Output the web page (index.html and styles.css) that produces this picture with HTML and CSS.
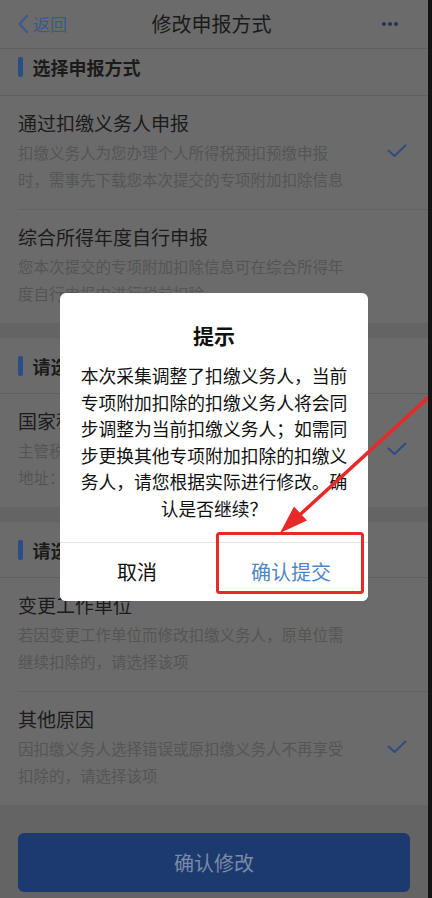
FILE: index.html
```html
<!DOCTYPE html>
<html lang="zh-CN">
<head>
<meta charset="utf-8">
<title>修改申报方式</title>
<link rel="stylesheet" href="styles.css">
</head>
<body>
<div class="page">
  <header class="nav">
    <div class="nav-left">
      <svg class="back-icon" width="12" height="20" viewBox="0 0 12 20"><path d="M10 2 L2.5 10 L10 18" fill="none" stroke="#3b5890" stroke-width="2" stroke-linecap="round" stroke-linejoin="round"/></svg>
      <span class="back-text">返回</span>
    </div>
    <div class="nav-title">修改申报方式</div>
    <div class="nav-right"><span class="dot"></span><span class="dot"></span><span class="dot"></span></div>
  </header>

  <section class="section first">
    <div class="sec-head first"><span class="bar"></span><span class="sec-title">选择申报方式</span></div>
    <div class="row">
      <div class="row-text">
        <div class="row-title">通过扣缴义务人申报</div>
        <div class="row-desc">扣缴义务人为您办理个人所得税预扣预缴申报时，需事先下载您本次提交的专项附加扣除信息</div>
      </div>
      <svg class="check" width="20" height="14" viewBox="0 0 20 14"><path d="M1.5 6.5 L7.5 12 L18.5 1.5" fill="none" stroke="#2e4c84" stroke-width="2" stroke-linecap="round" stroke-linejoin="round"/></svg>
    </div>
    <div class="row">
      <div class="row-text">
        <div class="row-title">综合所得年度自行申报</div>
        <div class="row-desc">您本次提交的专项附加扣除信息可在综合所得年度自行申报中进行税前扣除</div>
      </div>
    </div>
  </section>

  <section class="section">
    <div class="sec-head"><span class="bar"></span><span class="sec-title">请选择扣缴义务人</span></div>
    <div class="row">
      <div class="row-text">
        <div class="row-title">国家税务总局</div>
        <div class="row-desc">主管税务机关<br>地址：某路</div>
      </div>
      <svg class="check" width="20" height="14" viewBox="0 0 20 14"><path d="M1.5 6.5 L7.5 12 L18.5 1.5" fill="none" stroke="#2e4c84" stroke-width="2" stroke-linecap="round" stroke-linejoin="round"/></svg>
    </div>
  </section>

  <section class="section">
    <div class="sec-head"><span class="bar"></span><span class="sec-title">请选择修改原因</span></div>
    <div class="row">
      <div class="row-text">
        <div class="row-title">变更工作单位</div>
        <div class="row-desc">若因变更工作单位而修改扣缴义务人，原单位需继续扣除的，请选择该项</div>
      </div>
    </div>
    <div class="row">
      <div class="row-text">
        <div class="row-title">其他原因</div>
        <div class="row-desc">因扣缴义务人选择错误或原扣缴义务人不再享受扣除的，请选择该项</div>
      </div>
      <svg class="check" width="20" height="14" viewBox="0 0 20 14"><path d="M1.5 6.5 L7.5 12 L18.5 1.5" fill="none" stroke="#2e4c84" stroke-width="2" stroke-linecap="round" stroke-linejoin="round"/></svg>
    </div>
  </section>

  <footer class="footer">
    <button class="submit">确认修改</button>
  </footer>

  <div class="mask">
    <div class="dialog">
      <div class="dialog-title">提示</div>
      <div class="dialog-body">本次采集调整了扣缴义务人，当前专项附加扣除的扣缴义务人将会同步调整为当前扣缴义务人；如需同步更换其他专项附加扣除的扣缴义务人，请您根据实际进行修改。确认是否继续？</div>
      <div class="dialog-actions">
        <button class="action cancel">取消</button>
        <button class="action confirm">确认提交</button>
      </div>
    </div>
  </div>

  <svg class="annotation" width="428" height="898" viewBox="0 0 428 898">
    <rect x="217.5" y="533.5" width="145" height="59" rx="2" fill="none" stroke="#e62a2a" stroke-width="3"/>
    <line x1="440" y1="386.6" x2="298" y2="516.5" stroke="#e62a2a" stroke-width="3.5" stroke-linecap="round"/>
    <polygon points="280,533 307,520.5 294,506.5" fill="#e62a2a"/>
  </svg>
</div>
</body>
</html>
```

FILE: styles.css
```css
html, body {
  margin: 0;
  padding: 0;
}
body {
  background: #141414;
  font-family: "Noto Sans CJK SC", "Noto Sans", "Liberation Sans", sans-serif;
}
.page {
  position: relative;
  width: 428px;
  height: 898px;
  overflow: hidden;
  background: #646464;
}

/* nav */
.nav {
  height: 48px;
  display: grid;
  grid-template-columns: 1fr auto 1fr;
  align-items: center;
  background: #6b6b6b;
  border-bottom: 1px solid #5f5f5f;
  padding: 0 30px 0 17px;
}
.nav-left {
  display: flex;
  align-items: center;
  gap: 4px;
  color: #3b5890;
}
.back-icon {
  display: block;
}
.back-text {
  font-size: 17px;
  line-height: 24px;
}
.nav-title {
  font-size: 20px;
  color: #1b1b1b;
  line-height: 28px;
  padding-left: 8px;
}
.nav-right {
  display: flex;
  justify-content: flex-end;
  gap: 2px;
}
.dot {
  width: 4px;
  height: 4px;
  border-radius: 50%;
  background: #29324d;
}

/* sections */
.section {
  background: #6b6b6b;
  margin-top: 15px;
}
.section.first {
  margin-top: 0;
}
.sec-head {
  height: 56px;
  display: flex;
  align-items: center;
  padding-left: 18px;
  border-bottom: 1px solid #5f5f5f;
  box-sizing: border-box;
}
.sec-head.first {
  height: 47px;
  padding-bottom: 10px;
}
.bar {
  width: 4.5px;
  height: 20px;
  border-radius: 2px;
  background: #2c4c88;
  margin-right: 10px;
}
.sec-title {
  font-size: 18px;
  font-weight: bold;
  color: #1b1b1b;
  line-height: 24px;
}
.row {
  display: flex;
  align-items: center;
  margin-left: 18px;
  padding: 13px 21px 16px 0;
}
.row + .row {
  border-top: 1px solid #626262;
}
.row-text {
  flex: 1;
  max-width: 336px;
}
.row-title {
  font-size: 19px;
  line-height: 28px;
  color: #1b1b1b;
}
.row-desc {
  margin-top: 2px;
  font-size: 15.5px;
  line-height: 27px;
  color: #555;
}
.check {
  margin-left: auto;
  flex-shrink: 0;
  display: block;
}

/* footer */
.footer {
  padding: 28px 18px 0;
}
.submit {
  display: block;
  width: 100%;
  height: 59px;
  border: none;
  border-radius: 6px;
  background: #1d3a6e;
  color: #7b8aa6;
  font-family: inherit;
  font-size: 20px;
}

/* dialog */
.mask {
  position: absolute;
  left: 0;
  top: 0;
  width: 100%;
  height: 100%;
  display: flex;
  justify-content: center;
  align-items: flex-start;
  padding-top: 293px;
  box-sizing: border-box;
}
.dialog {
  width: 308px;
  background: #fff;
  border-radius: 6px;
  overflow: hidden;
}
.dialog-title {
  padding-top: 27px;
  font-size: 21px;
  font-weight: bold;
  line-height: 30px;
  text-align: center;
  color: #111;
}
.dialog-body {
  width: 271px;
  margin: 12px auto 0;
  padding-bottom: 20px;
  font-size: 17.8px;
  line-height: 26.6px;
  color: #111;
  text-align: center;
}
.dialog-actions {
  display: flex;
  height: 58px;
  border-top: 1px solid #e6e6e6;
}
.action {
  flex: 1;
  border: none;
  background: #fff;
  font-family: inherit;
  font-size: 20px;
}
.cancel {
  color: #111;
}
.confirm {
  color: #4f86c6;
}

.annotation {
  position: absolute;
  left: 0;
  top: 0;
  pointer-events: none;
}
```
